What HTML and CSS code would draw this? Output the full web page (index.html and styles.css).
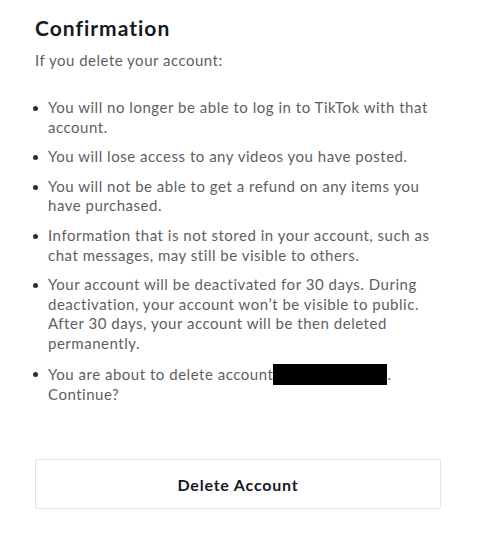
FILE: index.html
```
<!DOCTYPE html>
<html>
<head>
<meta charset="utf-8">
<link rel="stylesheet" href="styles.css">
</head>
<body>
<div class="dialog">
  <h1 class="title">Confirmation</h1>
  <p class="intro">If you delete your account:</p>
  <ul class="list">
    <li>You will no longer be able to log in to TikTok with that account.</li>
    <li>You will lose access to any videos you have posted.</li>
    <li>You will not be able to get a refund on any items you have purchased.</li>
    <li>Information that is not stored in your account, such as chat messages, may still be visible to others.</li>
    <li>Your account will be deactivated for 30 days. During deactivation, your account won’t be visible to public. After 30 days, your account will be then deleted permanently.</li>
    <li>You are about to delete account<span class="redact"></span>. Continue?</li>
  </ul>
  <button class="btn">Delete Account</button>
</div>
</body>
</html>
```
FILE: styles.css
```
html, body { margin: 0; padding: 0; background: #fff; }
body { font-family: "Lato", "Open Sans", sans-serif; }
.dialog { padding: 15px 37px 0 35px; width: 406px; }
.title { margin: 0; font-size: 21px; font-weight: 700; color: #161823; line-height: 26px; letter-spacing: 1px; }
.intro { margin: 9px 0 0; font-size: 15px; line-height: 20px; color: #5e5e62; letter-spacing: 0.5px; }
.list { margin: 28px 0 0; padding: 0 0 0 13px; list-style: none; }
.list li { position: relative; font-size: 15px; line-height: 19.6px; color: #5e5e62; margin-bottom: 10px; padding-right: 4px; letter-spacing: 0.52px; }
.list li::before { content: ""; position: absolute; left: -15px; top: 8px; width: 5px; height: 5px; border-radius: 50%; background: #2e2e32; }
.redact { display: inline-block; width: 114px; height: 21px; background: #000; vertical-align: -5px; }
.btn { display: block; margin-top: 55px; width: 406px; height: 50px; background: #fff; border: 1px solid #e3e3e4; border-radius: 2px; font-family: inherit; font-size: 16px; font-weight: 700; color: #161823; letter-spacing: 0.8px; cursor: pointer; }
```
